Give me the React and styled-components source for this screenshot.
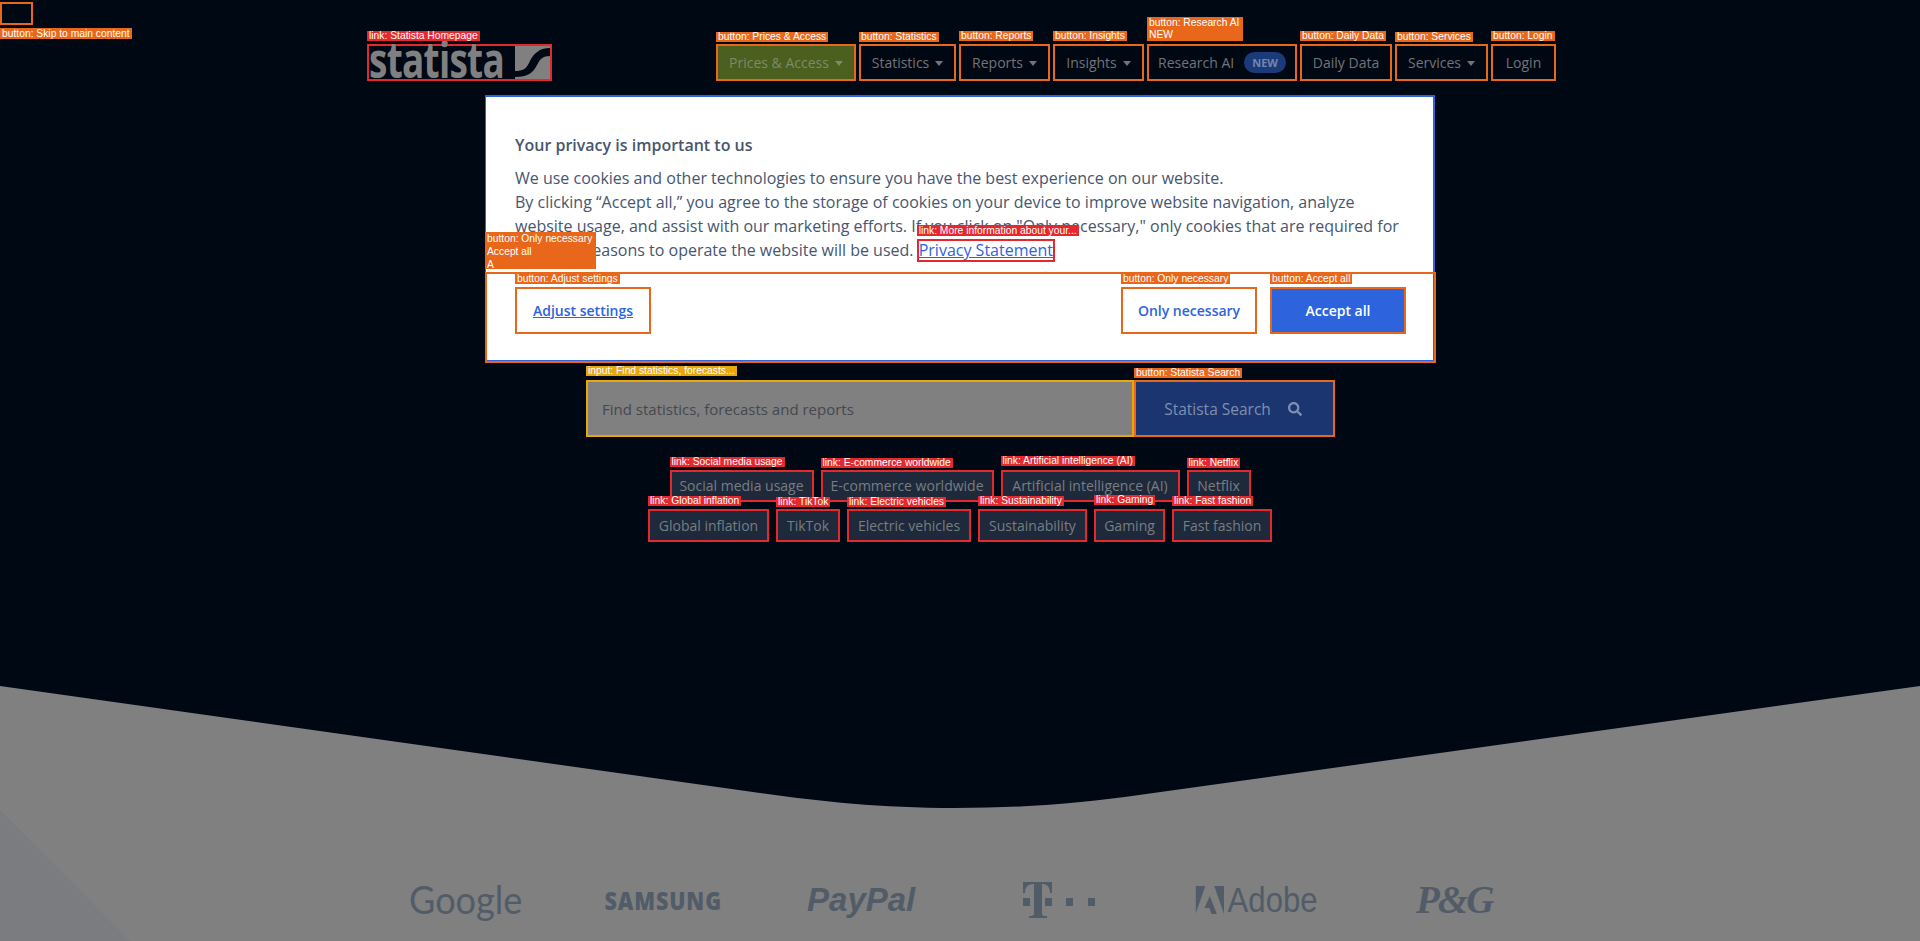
import React from "react";
import styled, { createGlobalStyle } from "styled-components";
import { FaSearch } from "react-icons/fa";

const GlobalStyle = createGlobalStyle`
  html, body {
    margin: 0;
    padding: 0;
    background: #000814;
  }
  * {
    box-sizing: border-box;
  }
`;

const Page = styled.div`
  position: relative;
  width: 1920px;
  height: 941px;
  overflow: hidden;
  background: #000814;
  font-family: "Open Sans", "Liberation Sans", sans-serif;
`;

/* little name tags that sit above every marked element */
const Tag = styled.span`
  position: absolute;
  left: -2px;
  bottom: calc(100% + ${(p) => p.$lift ?? 5}px);
  z-index: 5;
  max-width: ${(p) => (p.$max ? `${p.$max}px` : "none")};
  padding: 0 2px;
  background: ${(p) => p.$bg || "#e8671a"};
  color: #fff;
  font-family: "Liberation Sans", Arial, sans-serif;
  font-size: 10.3px;
  font-weight: 400;
  line-height: ${(p) => p.$line || 10}px;
  text-align: left;
  text-decoration: none;
  white-space: ${(p) => (p.$max ? "normal" : "nowrap")};
`;

const SkipButton = styled.div`
  position: absolute;
  left: 0;
  top: 2px;
  width: 33px;
  height: 23px;
  border: 2px solid #e8671a;
`;

const SkipTag = styled(Tag)`
  bottom: auto;
  top: 24px;
  line-height: 11px;
`;

const Header = styled.header`
  display: flex;
  justify-content: space-between;
  width: 1189px;
  margin-left: 367px;
  padding-top: 44px;
`;

const LogoLink = styled.a`
  position: relative;
  display: flex;
  align-items: flex-start;
  justify-content: space-between;
  width: 185px;
  height: 37px;
  border: 2px solid #e5282e;
  text-decoration: none;
`;

const LogoWord = styled.span`
  display: block;
  flex: none;
  width: 136px;
  height: 33px;
  color: #808080;
  font-family: "Open Sans", sans-serif;
  font-size: 50px;
  font-weight: 700;
  line-height: 26px;
  letter-spacing: -1px;
  transform: scaleX(0.74);
  transform-origin: 0 0;
  white-space: nowrap;
`;

const LogoMark = styled.svg`
  flex: none;
  width: 35px;
  height: 33px;
`;

const Nav = styled.nav`
  display: flex;
  gap: 3px;
`;

const NavItem = styled.button`
  position: relative;
  display: flex;
  align-items: center;
  justify-content: center;
  gap: 6px;
  width: ${(p) => p.$w}px;
  height: 37px;
  padding: 0;
  border: 2px solid #e8671a;
  background: ${(p) => (p.$active ? "#4b5f1e" : "transparent")};
  color: ${(p) => (p.$active ? "#7f8a68" : "#727478")};
  font-family: inherit;
  font-size: 14px;
  white-space: nowrap;
`;

const Caret = styled.i`
  width: 0;
  height: 0;
  margin-top: 2px;
  border-left: 4px solid transparent;
  border-right: 4px solid transparent;
  border-top: 5px solid currentColor;
`;

const NewBadge = styled.span`
  margin-left: 4px;
  padding: 0 8px;
  height: 21px;
  border-radius: 11px;
  background: #1b3a7a;
  color: #7187ab;
  font-size: 11px;
  font-weight: 700;
  line-height: 21px;
`;

const Dialog = styled.section`
  position: absolute;
  left: 485px;
  top: 95px;
  z-index: 3;
  width: 950px;
  height: 268px;
  padding: 36px 0 0;
  border: solid #2d64de;
  border-width: 2px 2px 0 1px;
  background: #fff;
  color: #46566f;
  display: flex;
  flex-direction: column;
`;

const DialogTitle = styled.h2`
  margin: 0 0 9px 29px;
  font-size: 16px;
  font-weight: 600;
  line-height: 24px;
`;

const DialogText = styled.p`
  margin: 0 30px 0 29px;
  font-size: 16px;
  line-height: 24px;
`;

const PrivacyLink = styled.a`
  position: relative;
  display: inline-block;
  height: 23px;
  margin-top: 1px;
  margin-left: -1px;
  border: 2px solid #e5282e;
  color: #2d64de;
  text-decoration: underline;
  line-height: 19px;
  vertical-align: top;
`;

const OverlapTag = styled(Tag)`
  left: -1px;
  top: 135px;
  bottom: auto;
  width: 111px;
  height: 37px;
  line-height: 13px;
  white-space: pre-line;
`;

const ActionBar = styled.div`
  position: relative;
  display: flex;
  align-items: flex-start;
  gap: 13px;
  height: 91px;
  margin: auto -3px 0 -1px;
  padding: 13px 28px 0 28px;
  border: 2px solid #e8671a;
  box-shadow: inset 0 -1px 0 #2d64de;
`;

const ActionButton = styled.button`
  position: relative;
  width: 136px;
  height: 47px;
  padding: 0;
  margin-left: ${(p) => (p.$push ? "auto" : 0)};
  border: 2px solid #e8671a;
  background: ${(p) => (p.$primary ? "#2d64de" : "#fff")};
  color: ${(p) => (p.$primary ? "#fff" : "#2d64de")};
  font-family: inherit;
  font-size: 14px;
  font-weight: 600;
  text-decoration: ${(p) => (p.$link ? "underline" : "none")};
`;

const SearchRow = styled.form`
  display: flex;
  width: 749px;
  height: 57px;
  margin: 299px 0 0 586px;
`;

const SearchInput = styled.div`
  position: relative;
  display: flex;
  align-items: center;
  flex: 1;
  padding-left: 14px;
  border: 2px solid #e8a70a;
  background: #808080;
  color: #44484f;
  font-size: 15px;
`;

const SearchButton = styled.button`
  position: relative;
  display: flex;
  align-items: center;
  justify-content: center;
  gap: 17px;
  width: 201px;
  padding: 0 3px 0 0;
  border: 2px solid #e8671a;
  background: #1a3570;
  color: #7f8fae;
  font-family: inherit;
  font-size: 15.5px;
`;

const ChipRows = styled.div`
  display: flex;
  flex-direction: column;
  gap: 7px;
  margin-top: 33px;
`;

const ChipRow = styled.div`
  display: flex;
  justify-content: center;
  gap: 7px;
`;

const Chip = styled.a`
  position: relative;
  display: flex;
  align-items: center;
  justify-content: center;
  width: ${(p) => p.$w}px;
  height: ${(p) => p.$h}px;
  padding-bottom: 1px;
  border: 2px solid #e5282e;
  background: #1e2a3b;
  color: #787d82;
  font-size: 14px;
  text-decoration: none;
  white-space: nowrap;
`;

const Partners = styled.section`
  position: absolute;
  left: 0;
  right: 0;
  bottom: 0;
  height: 255px;
  padding-top: 196px;
`;

const PartnerShape = styled.svg`
  position: absolute;
  left: 0;
  top: 0;
  width: 1920px;
  height: 255px;
`;

const LogoGrid = styled.div`
  position: relative;
  display: grid;
  grid-template-columns: repeat(6, 197.7px);
  justify-content: center;
  align-items: center;
  height: 36px;
  color: #525c69;
`;

const Brand = styled.span`
  justify-self: center;
  display: flex;
  align-items: center;
  gap: 4px;
  font-family: ${(p) => p.$font || '"Open Sans"'}, sans-serif;
  font-size: ${(p) => p.$size}px;
  font-weight: ${(p) => p.$weight || 400};
  font-style: ${(p) => (p.$italic ? "italic" : "normal")};
  letter-spacing: ${(p) => p.$spacing || 0}px;
  line-height: 36px;
  margin-top: ${(p) => p.$nudge || 0}px;
  transform: scaleX(${(p) => p.$stretch || 1});
  white-space: nowrap;
`;

const BrandMark = styled.svg`
  justify-self: center;
  width: ${(p) => p.$w}px;
  height: 36px;
  fill: #525c69;
`;

const AdobeGlyph = styled.svg`
  width: 32px;
  height: 28px;
  fill: #525c69;
`;

const navItems = [
  { label: "Prices & Access", w: 140, caret: true, active: true, lift: 4 },
  { label: "Statistics", w: 97, caret: true, lift: 4 },
  { label: "Reports", w: 91, caret: true },
  { label: "Insights", w: 91, caret: true },
  { label: "Research AI", w: 150, badge: true, tag: "Research AI NEW", max: 96, line: 12 },
  { label: "Daily Data", w: 92 },
  { label: "Services", w: 93, caret: true, lift: 4 },
  { label: "Login", w: 65 },
];

const chipRows = [
  {
    height: 32,
    chips: [
      { label: "Social media usage", w: 144 },
      { label: "E-commerce worldwide", w: 173, lift: 4 },
      { label: "Artificial intelligence (AI)", w: 179, lift: 6 },
      { label: "Netflix", w: 64, lift: 4 },
    ],
  },
  {
    height: 33,
    chips: [
      { label: "Global inflation", w: 121 },
      { label: "TikTok", w: 64, lift: 4 },
      { label: "Electric vehicles", w: 124, lift: 4 },
      { label: "Sustainability", w: 109 },
      { label: "Gaming", w: 71, lift: 6 },
      { label: "Fast fashion", w: 100 },
    ],
  },
];

export default function App() {
  return (
    <Page>
      <GlobalStyle />
      <SkipButton>
        <SkipTag>button: Skip to main content</SkipTag>
      </SkipButton>

      <Header>
        <LogoLink href="#">
          <Tag $bg="#e5282e">link: Statista Homepage</Tag>
          <LogoWord>statista</LogoWord>
          <LogoMark viewBox="0 0 35 33">
            <rect width="35" height="33" fill="#808080" />
            <path
              d="M0 25 C8 25 11 23 14 17 C18 8 24 2 35 2 L35 10 C28 10 25 13 22 19 C18 27 13 31 0 31 Z"
              fill="#000814"
            />
          </LogoMark>
        </LogoLink>
        <Nav>
          {navItems.map((item) => (
            <NavItem key={item.label} $w={item.w} $active={item.active}>
              <Tag $lift={item.lift} $max={item.max} $line={item.line}>
                button: {item.tag || item.label}
              </Tag>
              {item.label}
              {item.caret && <Caret />}
              {item.badge && <NewBadge>NEW</NewBadge>}
            </NavItem>
          ))}
        </Nav>
      </Header>

      <Dialog>
        <DialogTitle>Your privacy is important to us</DialogTitle>
        <DialogText>
          We use cookies and other technologies to ensure you have the best
          experience on our website.
          <br />
          By clicking “Accept all,” you agree to the storage of cookies on your
          device to improve website navigation, analyze website usage, and
          assist with our marketing efforts. If you click on "Only necessary,"
          only cookies that are required for technical reasons to operate the
          website will be used.{" "}
          <PrivacyLink href="#">
            <Tag $bg="#e5282e" $lift={5} $line={11}>
              link: More information about your...
            </Tag>
            Privacy Statement
          </PrivacyLink>
        </DialogText>
        <OverlapTag>{"button: Only necessary\nAccept all\nA"}</OverlapTag>
        <ActionBar>
          <ActionButton $link>
            <Tag>button: Adjust settings</Tag>
            Adjust settings
          </ActionButton>
          <ActionButton $push>
            <Tag>button: Only necessary</Tag>
            Only necessary
          </ActionButton>
          <ActionButton $primary>
            <Tag>button: Accept all</Tag>
            Accept all
          </ActionButton>
        </ActionBar>
      </Dialog>

      <SearchRow>
        <SearchInput>
          <Tag $bg="#e8a70a" $lift={6}>input: Find statistics, forecasts...</Tag>
          Find statistics, forecasts and reports
        </SearchInput>
        <SearchButton type="button">
          <Tag $lift={4}>button: Statista Search</Tag>
          Statista Search
          <FaSearch size={14} />
        </SearchButton>
      </SearchRow>

      <ChipRows>
        {chipRows.map((row) => (
          <ChipRow key={row.height}>
            {row.chips.map((chip) => (
              <Chip key={chip.label} $w={chip.w} $h={row.height} href="#">
                <Tag $bg="#e5282e" $lift={chip.lift}>link: {chip.label}</Tag>
                {chip.label}
              </Chip>
            ))}
          </ChipRow>
        ))}
      </ChipRows>

      <Partners>
        <PartnerShape viewBox="0 0 1920 255">
          <path
            d="M0 0 L760 107 C820 115.5 880 122 955 122 C1030 122 1085 116.5 1139 109 L1920 0 L1920 255 L0 255 Z"
            fill="#808080"
          />
          <path d="M0 124 L130 255 L0 255 Z" fill="#7a7c80" />
        </PartnerShape>
        <LogoGrid>
          <Brand $size={38} $stretch={0.95} $font="Lato" $nudge={-3}>Google</Brand>
          <Brand $size={25} $weight={800} $spacing={1} $stretch={0.86}>SAMSUNG</Brand>
          <Brand $size={33} $weight={700} $italic $font="Liberation Sans">PayPal</Brand>
          <BrandMark $w={72} viewBox="0 0 72 36">
            <path d="M0 0 H29 V11 H27 C27 5 24 2 19 2 V32 C19 33.5 20 34 24 34 V36 H6 V34 C10 34 11 33.5 11 32 V2 C5 2 2 5 2 11 H0 Z" />
            <rect x="0" y="16" width="7" height="8" />
            <rect x="22" y="16" width="7" height="8" />
            <rect x="43" y="16" width="7" height="8" />
            <rect x="65" y="16" width="7" height="8" />
          </BrandMark>
          <Brand $size={35} $font="Liberation Sans" $stretch={0.89}>
            <AdobeGlyph viewBox="0 0 32 28">
              <path d="M0 0 H11 L0 28 Z" />
              <path d="M21 0 H32 V28 Z" />
              <path d="M16 10 L24 28 H18 L15.5 22 H10 Z" />
            </AdobeGlyph>
            Adobe
          </Brand>
          <Brand $size={39} $weight={700} $italic $font="Liberation Serif" $spacing={-2}>P&amp;G</Brand>
        </LogoGrid>
      </Partners>
    </Page>
  );
}
